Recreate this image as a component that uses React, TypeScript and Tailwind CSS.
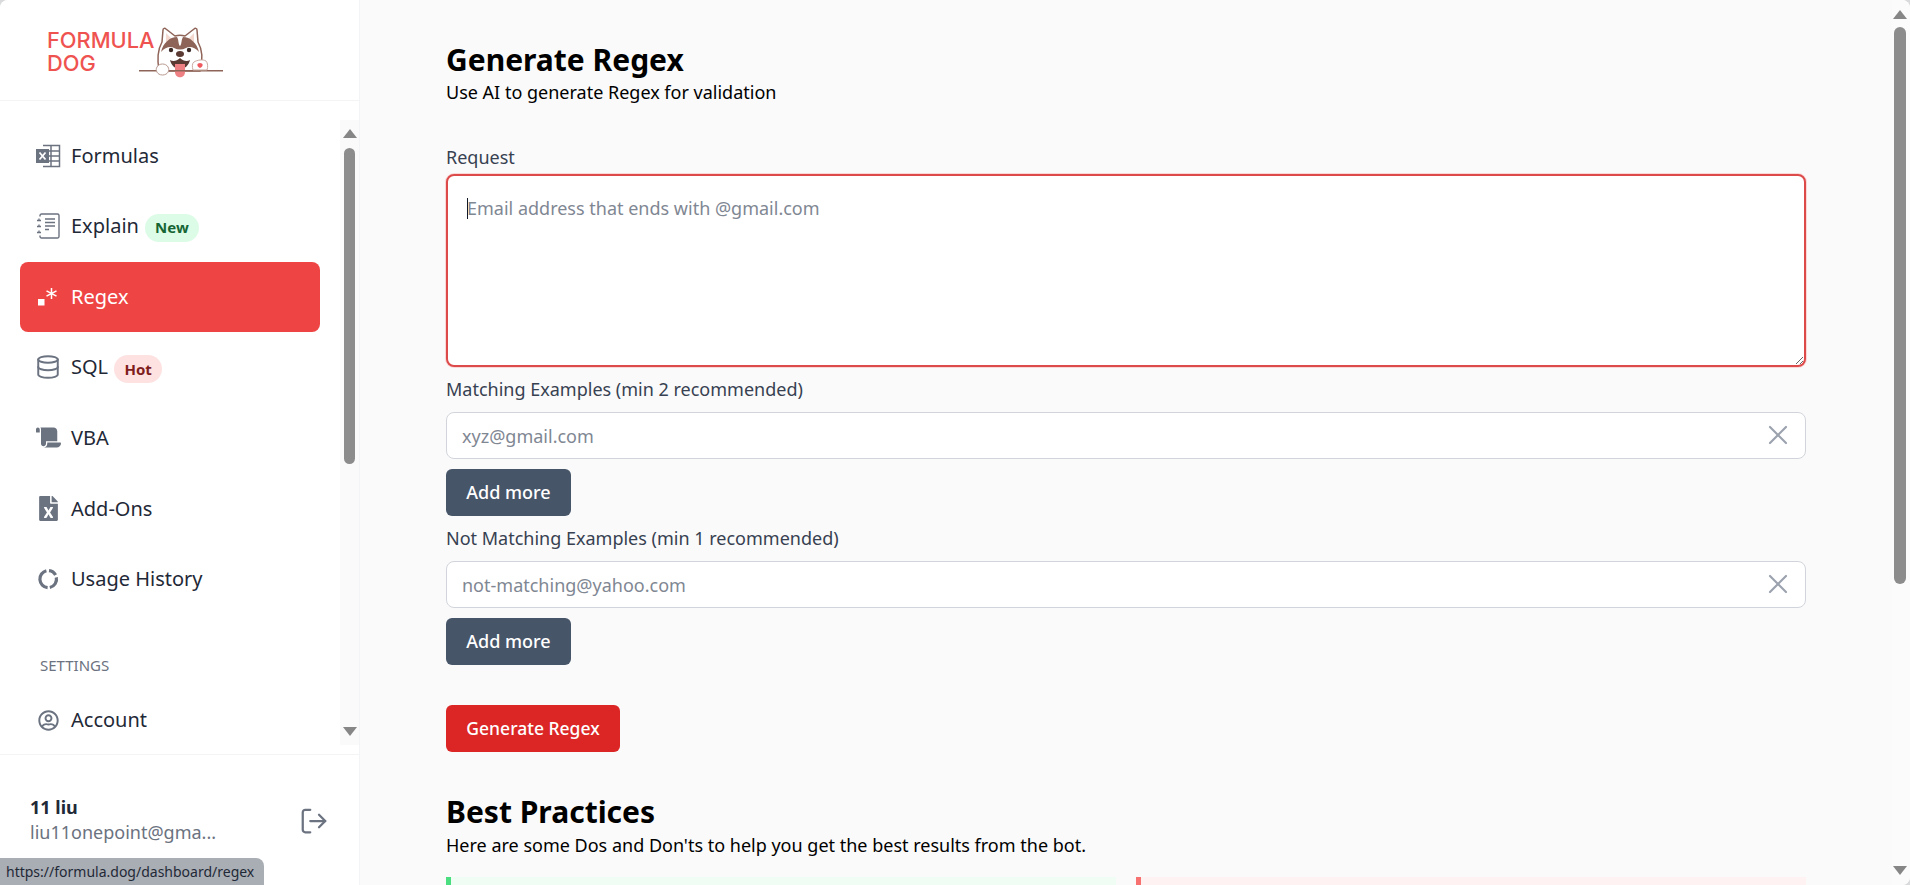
import { Database, LogOut, X } from "lucide-react";
import { FaFileExcel, FaRegUserCircle, FaScroll } from "react-icons/fa";
import type { ReactNode } from "react";

function ExcelIcon() {
    return (
        <svg width="26" height="24" viewBox="0 0 26 24" fill="none">
            <path d="M8 1.5h16.5v21H8" stroke="#6b7280" strokeWidth="1.5" />
            <path d="M16 1.5v21M8 7h16.5M8 12h16.5M8 17h16.5" stroke="#6b7280" strokeWidth="1.5" />
            <rect x="1" y="5" width="13" height="14" fill="#6b7280" />
            <path d="M4.5 8.5l6 7M10.5 8.5l-6 7" stroke="#fff" strokeWidth="1.8" />
        </svg>
    );
}

function NotebookIcon() {
    return (
        <svg width="24" height="26" viewBox="0 0 24 26" fill="none" stroke="#6b7280">
            <path d="M4 3.5V2.5A1.5 1.5 0 0 1 5.5 1h16A1.5 1.5 0 0 1 23 2.5v21a1.5 1.5 0 0 1-1.5 1.5h-16A1.5 1.5 0 0 1 4 23.5v-1" strokeWidth="1.4" />
            <path d="M9 6h10M9 9.5h10M9 13h10M9 16.5h4" strokeWidth="1.3" />
            <path d="M1 7.5h4M3 5.5v2M1 13.5h4M3 11.5v2M1 19.5h4M3 17.5v2" strokeWidth="1.3" />
        </svg>
    );
}

function RegexIcon() {
    return (
        <svg width="20" height="18" viewBox="0 0 20 18" fill="none">
            <rect x="0" y="11" width="6.5" height="6.5" fill="#fff" />
            <path d="M13.5 0v11M8.5 2.800l10 5.400M18.500 2.800l-10 5.400" stroke="#fff" strokeWidth="1.5" />
        </svg>
    );
}

function DonutIcon() {
    return (
        <svg width="22" height="22" viewBox="0 0 22 22" fill="none" stroke="#6b7280" strokeWidth="3.2">
            <path d="M12 2.700a8.500 8.500 0 0 1 6.600 4.400" />
            <path d="M19.300 9.300a8.500 8.500 0 0 1-6.500 10.200" />
            <path d="M10.600 19.600A8.600 8.600 0 0 1 9.400 2.700" />
        </svg>
    );
}

function DogLogo() {
    return (
        <svg width="90" height="52" viewBox="137 27 90 52" fill="none">
            <path d="M159 71c-2-12-1-22 3-29l1-12c0-2 2-2 3-1l9 7c3-1 7-1 10 0l9-7c1-1 3-1 3 1l1 12c4 7 5 18 2 29z" fill="#fff" stroke="#8f6458" strokeWidth="1.5" />
            <path d="M166 33l6 6-6 4zM194 33l-6 6 6 4z" fill="#f3d9d0" />
            <path d="M161 52c2-9 9-15 16-15 2 3 1 7 3 9 2-2 1-6 3-9 7 0 14 6 16 15-4-5-10-6-13-4-4 2-8 2-12 0-3-2-9-1-13 4z" fill="#8f6458" />
            <circle cx="171" cy="50" r="2.200" fill="#3b2a26" />
            <circle cx="189" cy="50" r="2.200" fill="#3b2a26" />
            <ellipse cx="180" cy="54" rx="4" ry="3" fill="#5a3a32" />
            <path d="M170 60c3 2 7 1 10-2 3 3 7 4 10 2-1 5-5 9-10 9s-9-4-10-9z" fill="#5a3a32" />
            <path d="M175 64h10v8c0 7-10 7-10 0z" fill="#ee7f82" />
            <rect x="139" y="70" width="84" height="1.500" fill="#8f6458" />
            <path d="M157 67c2-4 9-4 11 0 2 3 0 8-5.500 8s-7.500-5-5.500-8z" fill="#fff" stroke="#b99a90" strokeWidth="1" />
            <path d="M193 70c-1-3-1-7 1-8 3-2 9-3 12-1 2 2 2 6 1 9z" fill="#fff" stroke="#c9aba2" strokeWidth="1" />
            <path d="M200 63c-3 0-4 3 0 5 4-2 3-5 0-5z" fill="#ef5a5f" />
        </svg>
    );
}

function ScrollBar({ thumbClass, arrowClass }: { thumbClass: string; arrowClass: string }) {
    return (
        <div className={arrowClass}>
            <div className="h-0 w-0 border-x-[7px] border-b-[9px] border-x-transparent border-b-[#868686]" />
            <div className={thumbClass} />
            <div className="flex-1" />
            <div className="h-0 w-0 border-x-[7px] border-t-[9px] border-x-transparent border-t-[#868686]" />
        </div>
    );
}

function NavItem({ icon, label, badge, active }: { icon: ReactNode; label: string; badge?: ReactNode; active?: boolean }) {
    return (
        <div className={`flex h-[70px] shrink-0 items-center rounded-lg pl-[15px] text-[20px] ${active ? "bg-[#ef4444] text-white" : "text-[#1f2937]"}`}>
            <span className="flex w-[26px] shrink-0 items-center justify-center">{icon}</span>
            <span className="ml-[10px]">{label}</span>
            {badge}
        </div>
    );
}

function ExampleField({ label, placeholder }: { label: string; placeholder: string }) {
    return (
        <>
            <label className="mt-2 block text-[18px] leading-7 text-[#374151]">{label}</label>
            <div className="relative mt-[9px]">
                <input
                    placeholder={placeholder}
                    className="block h-[47px] w-full rounded-lg border border-[#d1d5db] bg-white pl-[15px] pr-12 text-[18px] placeholder:text-[#7f8793]"
                />
                <X className="absolute right-[12px] top-[7px] text-[#9ca3af]" size={32} strokeWidth={1.6} />
            </div>
            <button className="mt-[10px] block h-[47px] w-[125px] rounded-md bg-[#475569] text-[18px] font-medium text-white">Add more</button>
        </>
    );
}

export default function App() {
    return (
        <div className="h-[885px] overflow-hidden bg-[#d9dadc] font-['Noto_Sans',sans-serif]">
            <div className="relative flex h-full overflow-hidden rounded-t-lg rounded-br-lg bg-[#fafafa]">
                {/* Sidebar */}
                <aside className="flex w-[360px] shrink-0 flex-col border-r border-[#f3f4f6] bg-white">
                    <div className="flex h-[101px] shrink-0 items-start border-b border-[#f3f4f6] pl-[47px] pt-[27px]">
                        <div className="w-[90px] pt-[2px] font-['Inter',sans-serif] text-[21.8px] font-medium leading-[23px] text-[#ef5350]">
                            <div>FORMULA</div>
                            <div>DOG</div>
                        </div>
                        <DogLogo />
                    </div>

                    <div className="flex h-[653px] shrink-0 pb-[9px] pt-[19px]">
                        <nav className="flex min-w-0 flex-1 flex-col gap-[0.6px] overflow-hidden px-5 pt-[0.6px]">
                            <NavItem icon={<ExcelIcon />} label="Formulas" />
                            <NavItem
                                icon={<NotebookIcon />}
                                label="Explain"
                                badge={<span className="ml-[6px] mt-[3px] flex h-[28px] w-[54px] items-center justify-center rounded-full bg-[#dcfce7] text-[15px] font-bold text-[#166534]">New</span>}
                            />
                            <NavItem active icon={<RegexIcon />} label="Regex" />
                            <NavItem
                                icon={<Database size={26} color="#6b7280" strokeWidth={1.8} />}
                                label="SQL"
                                badge={<span className="ml-[6px] mt-[3px] flex h-[28px] w-[48px] items-center justify-center rounded-full bg-[#fee2e2] text-[15px] font-bold text-[#7f1d1d]">Hot</span>}
                            />
                            <NavItem icon={<FaScroll size={25} color="#6b7280" />} label="VBA" />
                            <NavItem icon={<FaFileExcel size={25} color="#6b7280" />} label="Add-Ons" />
                            <NavItem icon={<DonutIcon />} label="Usage History" />
                            <div className="mt-[40px] shrink-0 pl-5 text-[15px] leading-5 text-[#6b7280]">SETTINGS</div>
                            <div className="mt-[10px]">
                                <NavItem icon={<FaRegUserCircle size={21} color="#6b7280" />} label="Account" />
                            </div>
                        </nav>
                        <ScrollBar
                            arrowClass="flex w-[19px] shrink-0 flex-col items-center bg-[#fafafa] py-[9px]"
                            thumbClass="mt-[10px] h-[316px] w-[11px] shrink-0 rounded-full bg-[#8c8c8c]"
                        />
                    </div>

                    <div className="flex flex-1 items-start border-t border-[#f3f4f6] pl-[30px] pr-[30px] pt-10">
                        <div className="min-w-0 flex-1">
                            <div className="text-[18px] font-bold leading-[25px] text-[#1f2937]">11 liu</div>
                            <div className="truncate text-[18px] leading-[25px] text-[#6b7280]">liu11onepoint@gma...</div>
                        </div>
                        <LogOut className="mt-[11px] text-[#6b7280]" size={30} strokeWidth={1.8} />
                    </div>
                </aside>

                {/* Main */}
                <main className="flex min-w-0 flex-1 overflow-hidden">
                    <div className="min-w-0 flex-1 pl-[86px] pr-[86px] pt-[42px]">
                        <h1 className="text-[30px] font-bold leading-9 text-black">Generate Regex</h1>
                        <p className="text-[18px] leading-7 text-black">Use AI to generate Regex for validation</p>

                        <label className="mt-[37px] block text-[18px] leading-7 text-[#374151]">Request</label>
                        <div className="relative mt-[3px]">
                            <textarea
                                placeholder="Email address that ends with @gmail.com"
                                className="block h-[193px] w-full rounded-lg border-2 border-[#dc4a4a] bg-white pl-[19px] pr-5 pt-[19px] text-[18px] outline-none ring-1 ring-[#fca5a5]/40 placeholder:text-[#7f8793]"
                            />
                            <div className="absolute left-[21px] top-[24px] h-[21px] w-px bg-[#111827]" />
                        </div>

                        <ExampleField label="Matching Examples (min 2 recommended)" placeholder="xyz@gmail.com" />
                        <ExampleField label="Not Matching Examples (min 1 recommended)" placeholder="not-matching@yahoo.com" />

                        <button className="mt-10 block h-[47px] w-[174px] rounded-md bg-[#dc2626] text-[17.5px] font-medium text-white">Generate Regex</button>

                        <h2 className="mt-[42px] text-[30px] font-bold leading-9 text-black">Best Practices</h2>
                        <p className="mt-px text-[18px] leading-7 text-black">Here are some Dos and Don'ts to help you get the best results from the bot.</p>

                        <div className="mt-[18px] grid grid-cols-2 gap-5">
                            <div className="h-[200px] border-l-[5px] border-[#4ade80] bg-[#f0fdf4]" />
                            <div className="h-[200px] border-l-[5px] border-[#f87171] bg-[#fef2f2]" />
                        </div>
                    </div>
                    <ScrollBar
                        arrowClass="flex w-[18px] shrink-0 flex-col items-center bg-[#fbfbfb] py-[10px] pr-[3px]"
                        thumbClass="mt-[8px] h-[557px] w-[12px] shrink-0 rounded-full bg-[#8c8c8c]"
                    />
                </main>

                {/* Link preview of the browser */}
                <div className="absolute bottom-0 left-0 flex h-[27px] w-[264px] items-center rounded-tr-lg bg-[#a9adb4] pl-[6px] text-[14px] text-[#1f2937]">
                    https://formula.dog/dashboard/regex
                </div>
            </div>
        </div>
    );
}
